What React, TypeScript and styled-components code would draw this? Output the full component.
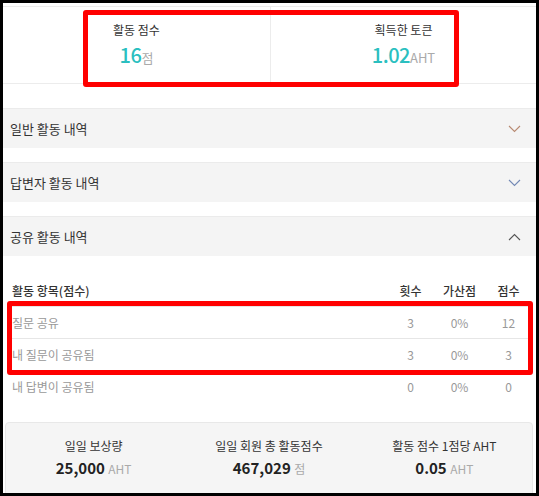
import * as React from 'react';
import styled, { createGlobalStyle } from 'styled-components';

const GlobalStyle = createGlobalStyle`
    html, body {
        margin: 0;
        padding: 0;
        background: #000;
    }
    body {
        font-family: "Noto Sans CJK KR", "Noto Sans", sans-serif;
        color: #333;
    }
`;

type Row = { name: string; count: string; bonus: string; score: string };

const rows: Row[] = [
    { name: '질문 공유', count: '3', bonus: '0%', score: '12' },
    { name: '내 질문이 공유됨', count: '3', bonus: '0%', score: '3' },
    { name: '내 답변이 공유됨', count: '0', bonus: '0%', score: '0' },
];

const sections = [
    { title: '일반 활동 내역', open: false, color: '#b88a72' },
    { title: '답변자 활동 내역', open: false, color: '#7389b5' },
    { title: '공유 활동 내역', open: true, color: '#555' },
];

const stats = [
    { label: '일일 보상량', value: '25,000', unit: 'AHT' },
    { label: '일일 회원 총 활동점수', value: '467,029', unit: '점' },
    { label: '활동 점수 1점당 AHT', value: '0.05', unit: 'AHT' },
];

function Chevron({ up, color }: { up: boolean; color: string }) {
    return (
        <svg width="13" height="8" viewBox="0 0 13 8">
            <polyline
                points={up ? '1,7 6.5,1.5 12,7' : '1,1 6.5,6.5 12,1'}
                fill="none"
                stroke={color}
                strokeWidth="1.1"
            />
        </svg>
    );
}

export default function App() {
    return (
        <>
            <GlobalStyle />
            <Page>
                <TopCard>
                    <TopCell>
                        <TopLabel>활동 점수</TopLabel>
                        <TopValue>16<TopUnit>점</TopUnit></TopValue>
                    </TopCell>
                    <TopCell $divider>
                        <TopLabel>획득한 토큰</TopLabel>
                        <TopValue>1.02<TopUnit>AHT</TopUnit></TopValue>
                    </TopCell>
                </TopCard>

                <Sections>
                    {sections.map((s) => (
                        <Section key={s.title}>
                            <SectionHeader>
                                <span>{s.title}</span>
                                <Chevron up={s.open} color={s.color} />
                            </SectionHeader>
                            {s.open && (
                                <Table>
                                    <HeadRow>
                                        <NameCell $head>활동 항목(점수)</NameCell>
                                        <NumCell $head>횟수</NumCell>
                                        <NumCell $head>가산점</NumCell>
                                        <NumCell $head>점수</NumCell>
                                    </HeadRow>
                                    {rows.map((r) => (
                                        <BodyRow key={r.name}>
                                            <NameCell>{r.name}</NameCell>
                                            <NumCell>{r.count}</NumCell>
                                            <NumCell>{r.bonus}</NumCell>
                                            <NumCell>{r.score}</NumCell>
                                        </BodyRow>
                                    ))}
                                </Table>
                            )}
                        </Section>
                    ))}
                </Sections>

                <StatsPanel>
                    {stats.map((s) => (
                        <Stat key={s.label}>
                            <StatLabel>{s.label}</StatLabel>
                            <StatValue>{s.value} <StatUnit>{s.unit}</StatUnit></StatValue>
                        </Stat>
                    ))}
                </StatsPanel>

                <Highlight style={{ left: 80, top: 7, width: 376, height: 77 }} />
                <Highlight style={{ left: 4, top: 298, width: 526, height: 74 }} />
            </Page>
        </>
    );
}

const Page = styled.div`
    position: relative;
    margin: 3px;
    height: 490px;
    overflow: hidden;
    background: #fff;
    padding-top: 3px;
    box-sizing: border-box;
`;

const TopCard = styled.div`
    display: grid;
    grid-template-columns: 267px 1fr;
    height: 78px;
    border-top: 1px solid #ececec;
    border-bottom: 1px solid #ececec;
    box-sizing: border-box;
`;

const TopCell = styled.div<{ $divider?: boolean }>`
    display: flex;
    flex-direction: column;
    align-items: center;
    padding-top: 14px;
    border-left: ${(p) => (p.$divider ? '1px solid #ececec' : 'none')};
`;

const TopLabel = styled.div`
    font-size: 12px;
    line-height: 18px;
    color: #333;
`;

const TopValue = styled.div`
    margin-top: 3px;
    font-size: 20px;
    line-height: 26px;
    font-weight: 500;
    color: #2bbfc0;
    letter-spacing: -0.5px;
`;

const TopUnit = styled.span`
    font-size: 13px;
    font-weight: 400;
    color: #aaa;
    letter-spacing: 0;
`;

const Sections = styled.div`
    margin-top: 24px;
    display: flex;
    flex-direction: column;
    gap: 14px;
`;

const Section = styled.div``;

const SectionHeader = styled.div`
    display: flex;
    align-items: center;
    justify-content: space-between;
    height: 39px;
    padding: 0 15px 0 7px;
    background: #f4f4f4;
    border-top: 1px solid #ebebeb;
    font-size: 13px;
    color: #333;
`;

const Table = styled.div`
    padding: 18px 3px 0 9px;
`;

const RowBase = styled.div`
    display: grid;
    grid-template-columns: 1fr 49px 49px 49px;
    align-items: center;
    height: 32px;
    box-sizing: border-box;
`;

const HeadRow = styled(RowBase)``;

const BodyRow = styled(RowBase)`
    border-top: 1px solid #e6e6e6;
`;

const NameCell = styled.div<{ $head?: boolean }>`
    font-size: 12px;
    color: ${(p) => (p.$head ? '#333' : '#999')};
    font-weight: ${(p) => (p.$head ? 500 : 400)};
`;

const NumCell = styled.div<{ $head?: boolean }>`
    text-align: center;
    font-size: 12px;
    color: ${(p) => (p.$head ? '#333' : '#999')};
    font-weight: ${(p) => (p.$head ? 500 : 400)};
`;

const StatsPanel = styled.div`
    margin: 20px 3px 0 2px;
    display: grid;
    grid-template-columns: repeat(3, 1fr);
    padding: 14px 0 20px;
    background: #f5f5f5;
    border: 1px solid #e8e8e8;
    border-radius: 4px;
`;

const Stat = styled.div`
    display: flex;
    flex-direction: column;
    align-items: center;
`;

const StatLabel = styled.div`
    font-size: 12px;
    line-height: 18px;
    color: #333;
`;

const StatValue = styled.div`
    margin-top: 2px;
    font-size: 15px;
    line-height: 22px;
    font-weight: 700;
    color: #222;
`;

const StatUnit = styled.span`
    font-size: 12px;
    font-weight: 400;
    color: #aaa;
`;

const Highlight = styled.div`
    position: absolute;
    border: 5px solid #ff0000;
    border-radius: 3px;
    box-sizing: border-box;
    pointer-events: none;
`;
